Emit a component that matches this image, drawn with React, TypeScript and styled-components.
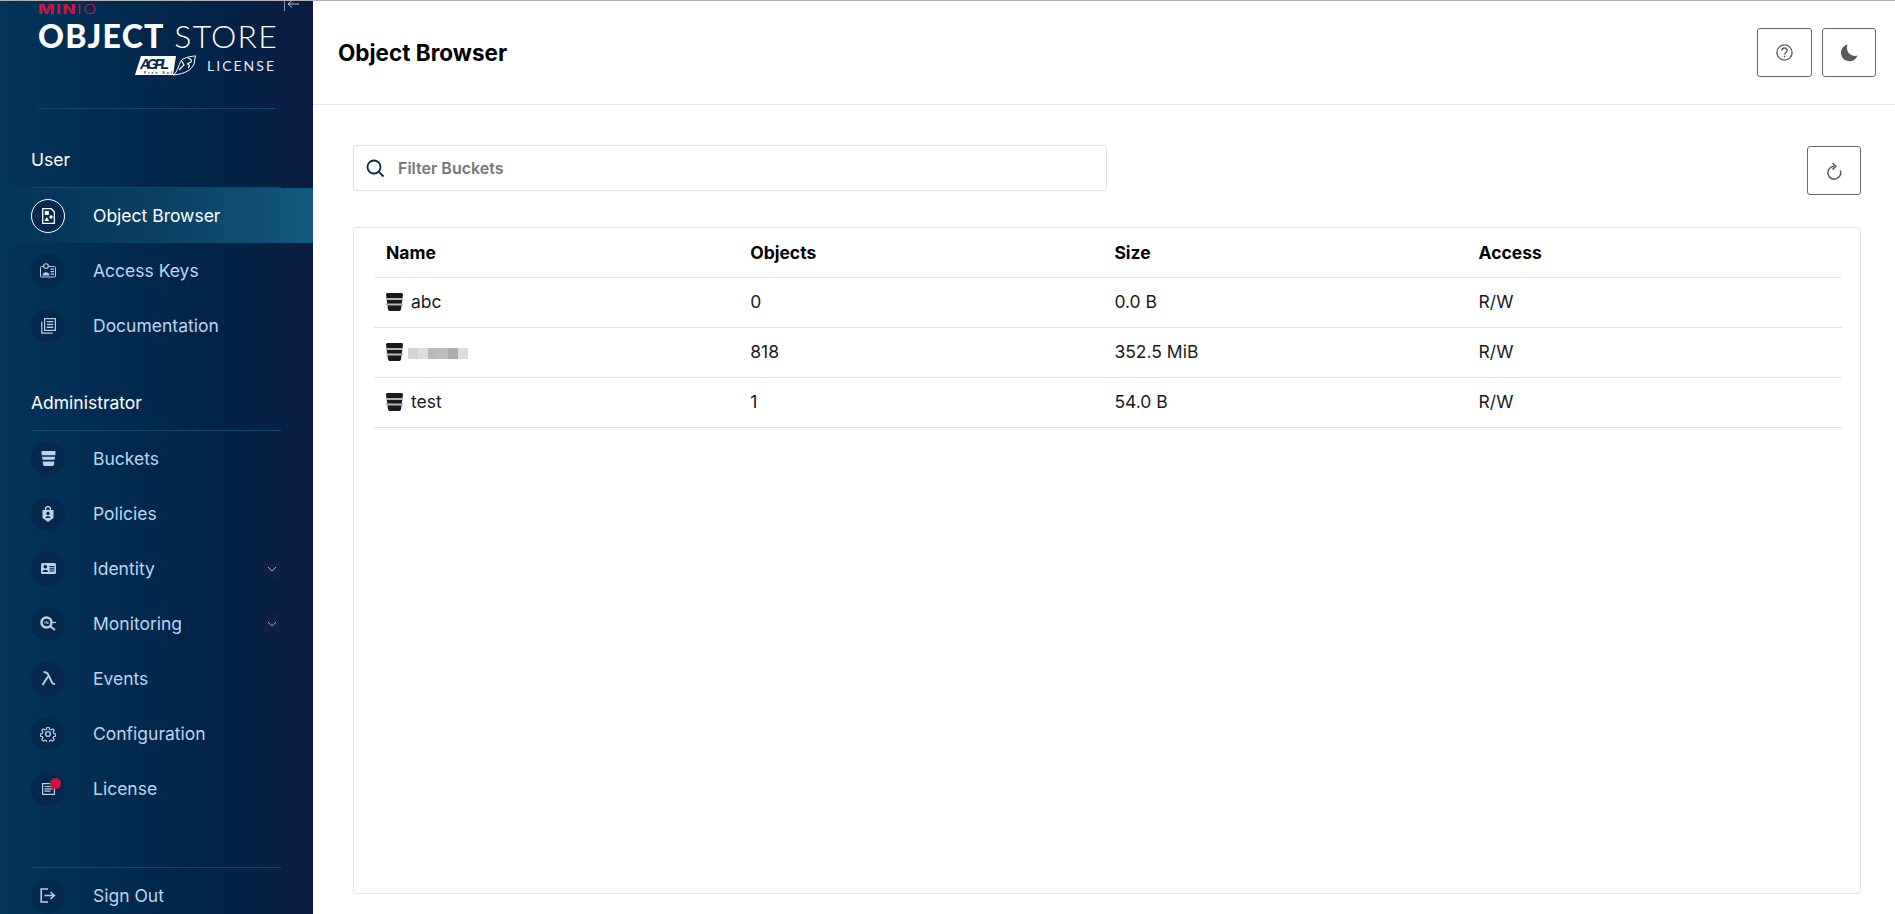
import React from 'react';
import styled, { createGlobalStyle } from 'styled-components';

const FONT = `Inter, "Liberation Sans", sans-serif`;

const GlobalStyle = createGlobalStyle`
  html, body {
    margin: 0;
    padding: 0;
    height: 100%;
    overflow: hidden;
    background: #fff;
    font-family: ${FONT};
  }
  * {
    box-sizing: border-box;
  }
`;

const BucketGlyph: React.FC<{ width?: number; height?: number; stripe?: string }> = ({
  width = 17,
  height = 18,
  stripe = '#06284f',
}) => (
  <svg width={width} height={height} viewBox="0 0 17 18">
    <path
      d="M1.500 0h14A1.500 1.500 0 0 1 17 1.500L15 16.500A1.800 1.800 0 0 1 13.200 18H3.800A1.800 1.800 0 0 1 2 16.500L0 1.500A1.500 1.500 0 0 1 1.500 0z"
      fill="currentColor"
    />
    <path d="M0 5h17v2H0zM0 10.500h17v2H0z" fill={stripe} />
  </svg>
);

const navIcons: Record<string, React.ReactNode> = {
  browser: (
    <svg width="13" height="16" viewBox="0 0 13 16">
      <path d="M.7.7h8.500l3.100 3.100v11.500H.7z" fill="none" stroke="currentColor" strokeWidth="1.300" />
      <rect x="2.800" y="3" width="4" height="4" fill="currentColor" />
      <circle cx="9" cy="9" r="1.700" fill="currentColor" />
      <path d="M4.800 9l2.300 4H2.500z" fill="currentColor" />
    </svg>
  ),
  keys: (
    <svg width="16" height="15" viewBox="0 0 16 15">
      <path d="M4 3.500H1.500a1 1 0 0 0-1 1V13a1 1 0 0 0 1 1h13a1 1 0 0 0 1-1V4.500a1 1 0 0 0-1-1H8" fill="none" stroke="currentColor" strokeWidth="1" />
      <circle cx="6" cy="3" r="2.300" fill="none" stroke="currentColor" strokeWidth="1.100" />
      <path d="M2.500 12.500c0-4.500 7-4.500 7 0zM10.500 5.500h3.500v1.300h-3.500zM10.500 8h3.500v1.300h-3.500zM10.500 10.500h3.500v1.300h-3.500z" fill="currentColor" />
    </svg>
  ),
  docs: (
    <svg width="15" height="16" viewBox="0 0 15 16">
      <rect x="3.600" y="0.600" width="10.800" height="11.800" fill="none" stroke="currentColor" strokeWidth="1.200" />
      <path d="M.8 3.500v11.700h10.700" fill="none" stroke="currentColor" strokeWidth="1.200" />
      <path d="M5.800 3h6.400v1.300H5.800zM5.800 5.800h6.400v1.300H5.800zM5.800 8.600h6.400v1.300H5.800z" fill="currentColor" />
    </svg>
  ),
  policies: (
    <svg width="12" height="16" viewBox="0 0 12 16">
      <path d="M3.500 4V3a2.500 2.500 0 0 1 5 0v1" fill="none" stroke="currentColor" strokeWidth="1.400" />
      <path d="M.5 4h11v8L6 16 .5 12z" fill="currentColor" />
      <circle cx="6" cy="7.500" r="1.700" fill="#06284f" />
      <path d="M3.300 12c.3-2.500 5.100-2.500 5.400 0z" fill="#06284f" />
    </svg>
  ),
  identity: (
    <svg width="15" height="11" viewBox="0 0 15 11">
      <rect width="15" height="11" rx="1.500" fill="currentColor" />
      <circle cx="4.300" cy="3.800" r="1.800" fill="#06284f" />
      <path d="M1.500 9c.2-3 5.400-3 5.600 0zM8.500 3h5v1.200h-5zM8.500 5.200h5v1.200h-5zM8.500 7.400h5v1.200h-5z" fill="#06284f" />
    </svg>
  ),
  monitoring: (
    <svg width="16" height="15" viewBox="0 0 16 15">
      <circle cx="6.500" cy="6.500" r="5" fill="none" stroke="currentColor" strokeWidth="2.400" />
      <path d="M4 7h1.500l1-2 1 3 .6-1h1" fill="none" stroke="currentColor" strokeWidth="0.900" />
      <path d="M10.500 10.500L15 14" stroke="currentColor" strokeWidth="2" />
      <path d="M12.500 6.500H16" stroke="currentColor" strokeWidth="1.200" />
    </svg>
  ),
  events: (
    <svg width="15" height="15" viewBox="0 0 15 15">
      <path d="M2.500 1.200c3 -.6 4 .5 5 3L11 11.500c.5 1.200 1.500 1.700 3 1.500M7 5.500L1.500 14" fill="none" stroke="currentColor" strokeWidth="1.900" />
    </svg>
  ),
  config: (
    <svg width="16" height="16" viewBox="0 0 24 24" fill="none" stroke="currentColor" strokeWidth="1.900" strokeLinejoin="round">
      <circle cx="12" cy="12" r="3.600" />
      <path d="M10 1.500h4l.6 3.200 2.300 1 2.700-1.900 2.800 2.800-1.900 2.700 1 2.300 3 .4v4l-3 .6-1 2.300 1.900 2.600-2.800 2.800-2.700-1.800-2.300 1-.6 3h-4l-.6-3-2.300-1-2.700 1.800-2.800-2.800 1.900-2.600-1-2.300-3-.6v-4l3-.4 1-2.300L1.600 6.600l2.800-2.800 2.700 1.900 2.300-1z" transform="translate(1.200 .9) scale(.9)" />
    </svg>
  ),
  license: (
    <svg width="13" height="12" viewBox="0 0 13 12">
      <rect x="0.600" y="0.600" width="11.800" height="10.800" fill="none" stroke="currentColor" strokeWidth="1.200" />
      <path d="M2.500 3h8v1.100h-8zM2.500 5.300h8v1.100h-8zM2.500 7.600h6v1.100h-6z" fill="currentColor" />
    </svg>
  ),
  signout: (
    <svg width="16" height="15" viewBox="0 0 16 15">
      <path d="M8 1H1.200v13H8" fill="none" stroke="currentColor" strokeWidth="1.600" />
      <path d="M4.500 7.500h9M10.500 4l3.800 3.500-3.800 3.500" fill="none" stroke="currentColor" strokeWidth="1.600" />
    </svg>
  ),
};

const Chevron = () => (
  <svg width="10" height="6" viewBox="0 0 10 6">
    <path d="M1 1l4 4 4-4" fill="none" stroke="currentColor" strokeWidth="0.900" />
  </svg>
);

interface Nav {
  icon: string;
  label: string;
  expand?: boolean;
  badge?: boolean;
}

const userNav: Nav[] = [
  { icon: 'browser', label: 'Object Browser' },
  { icon: 'keys', label: 'Access Keys' },
  { icon: 'docs', label: 'Documentation' },
];

const adminNav: Nav[] = [
  { icon: 'buckets', label: 'Buckets' },
  { icon: 'policies', label: 'Policies' },
  { icon: 'identity', label: 'Identity', expand: true },
  { icon: 'monitoring', label: 'Monitoring', expand: true },
  { icon: 'events', label: 'Events' },
  { icon: 'config', label: 'Configuration' },
  { icon: 'license', label: 'License', badge: true },
];

const buckets = [
  { name: 'abc', objects: '0', size: '0.0 B', access: 'R/W' },
  { name: '', objects: '818', size: '352.5 MiB', access: 'R/W' },
  { name: 'test', objects: '1', size: '54.0 B', access: 'R/W' },
];

const mosaic = ['#d4d4d4', '#dedede', '#b9b9b9', '#bcbcbc', '#adadad', '#dcdcdc'];

const NavRow: React.FC<{ item: Nav; active?: boolean }> = ({ item, active }) => (
  <NavItem $active={active}>
    <IconCircle $active={active}>
      {item.icon === 'buckets' ? <BucketGlyph width={15} height={15} /> : navIcons[item.icon]}
      {item.badge && <RedDot />}
    </IconCircle>
    <NavLabel $active={active}>{item.label}</NavLabel>
    {item.expand && (
      <ExpandBox>
        <Chevron />
      </ExpandBox>
    )}
  </NavItem>
);

const App: React.FC = () => (
  <>
    <GlobalStyle />
    <Page>
      <Sidebar>
        <CollapseButton>
          <svg width="15" height="11" viewBox="0 0 15 11">
            <path d="M.5 0v11" stroke="#8b98ab" strokeWidth="1" />
            <path d="M15 4H4M8 .5L4 4l4 3.500" fill="none" stroke="#c7d0dc" strokeWidth="0.900" />
          </svg>
        </CollapseButton>
        <Logo>
          <LogoBrand>
            <b>MIN</b>IO
          </LogoBrand>
          <LogoTitle>
            <b>OBJECT</b> STORE
          </LogoTitle>
          <LogoLicense>
            <svg width="61" height="21" viewBox="0 0 61 21">
              <path d="M6 1h35l-3 19H0z" fill="#fff" />
              <text x="5" y="14" fontFamily="Liberation Sans, sans-serif" fontSize="14" fontWeight="700" fontStyle="italic" fill="#06284f" textLength="31">
                AGPL
              </text>
              <text x="9" y="19" fontFamily="Liberation Sans, sans-serif" fontSize="3.500" fontWeight="700" fill="#06284f">
                Free Software
              </text>
              <path d="M38 20C43 18 44 6 48 4c4-2 9-3 13-3-2 3-1 5-2 8-2 5-8 10-21 11z" fill="none" stroke="#fff" strokeWidth="1" />
              <path d="M46 5l3 5-5 5M53 3c3 1 4 2 3 4l-4 2c3 0 3 2 1 4" fill="none" stroke="#fff" strokeWidth="1.200" />
            </svg>
            <span>LICENSE</span>
          </LogoLicense>
        </Logo>
        <LogoRule />
        <SectionTitle $first>User</SectionTitle>
        {userNav.map((item, i) => (
          <NavRow key={item.label} item={item} active={i === 0} />
        ))}
        <SectionTitle>Administrator</SectionTitle>
        {adminNav.map(item => (
          <NavRow key={item.label} item={item} />
        ))}
        <FooterRule />
        <NavRow item={{ icon: 'signout', label: 'Sign Out' }} />
      </Sidebar>
      <Main>
        <Header>
          <Title>Object Browser</Title>
          <HeaderActions>
            <OutlineButton type="button" aria-label="Help" $width={55}>
              <svg width="17" height="17" viewBox="0 0 17 17">
                <circle cx="8.500" cy="8.500" r="7.600" fill="none" stroke="currentColor" strokeWidth="1.300" />
                <path d="M5.900 6.500c.2-3.400 5.400-3.200 5.300 0 0 2-2.500 1.900-2.600 4" fill="none" stroke="currentColor" strokeWidth="1.400" />
                <circle cx="8.600" cy="12.600" r="0.900" fill="currentColor" />
              </svg>
            </OutlineButton>
            <OutlineButton type="button" aria-label="Dark mode">
              <svg width="18" height="18" viewBox="0 0 18 18">
                <path d="M7.500.5a8.500 8.500 0 1 0 10 11C11.500 13.500 5 8 7.500.5z" fill="currentColor" />
              </svg>
            </OutlineButton>
          </HeaderActions>
        </Header>
        <Content>
          <Toolbar>
            <SearchBox>
              <svg width="19" height="19" viewBox="0 0 19 19">
                <circle cx="8" cy="8" r="6.500" fill="none" stroke="#06284f" strokeWidth="1.800" />
                <path d="M12.700 12.700L17.500 17.500" stroke="#06284f" strokeWidth="1.800" />
              </svg>
              <SearchInput placeholder="Filter Buckets" />
            </SearchBox>
            <OutlineButton type="button" aria-label="Refresh">
              <svg width="16" height="18" viewBox="0 0 16 18">
                <path d="M14.300 8.500A6.400 6.400 0 1 1 8 4.300" fill="none" stroke="currentColor" strokeWidth="1.500" />
                <path d="M6.500 1l3.300 3.300-3.300 3.300" fill="none" stroke="currentColor" strokeWidth="1.500" />
              </svg>
            </OutlineButton>
          </Toolbar>
          <TablePanel>
            <HeadRow>
              <HeadCell>Name</HeadCell>
              <HeadCell>Objects</HeadCell>
              <HeadCell>Size</HeadCell>
              <HeadCell>Access</HeadCell>
            </HeadRow>
            {buckets.map(b => (
              <Row key={b.objects}>
                <NameCell>
                  <BucketGlyph stripe="#b5b5b5" />
                  {b.name ? (
                    <span>{b.name}</span>
                  ) : (
                    <Mosaic>
                      {mosaic.map((c, i) => (
                        <MosaicCell key={i} $color={c} />
                      ))}
                    </Mosaic>
                  )}
                </NameCell>
                <Cell>{b.objects}</Cell>
                <Cell>{b.size}</Cell>
                <Cell>{b.access}</Cell>
              </Row>
            ))}
          </TablePanel>
        </Content>
      </Main>
    </Page>
  </>
);

const Page = styled.div`
  display: flex;
  height: 914px;
  overflow: hidden;
  border-top: 1px solid #b0b0b0;
`;

const Sidebar = styled.aside`
  position: relative;
  flex: 0 0 313px;
  display: flex;
  flex-direction: column;
  overflow: hidden;
  background: linear-gradient(90deg, #03345a 0%, #012549 60%, #0b1d41 100%);
`;

const CollapseButton = styled.div`
  position: absolute;
  top: -1px;
  left: 284px;
  line-height: 0;
`;

const Logo = styled.div`
  flex: none;
  display: flex;
  flex-direction: column;
  align-items: flex-start;
  width: 238px;
  height: 104px;
  margin: 3px 0 0 38px;
  color: #fff;
`;

const LogoBrand = styled.div`
  font-family: Inter, sans-serif;
  font-size: 12.500px;
  line-height: 11px;
  height: 11px;
  font-weight: 300;
  letter-spacing: 1px;
  color: #c8153e;
  transform: scaleX(1.4);
  transform-origin: left center;

  b {
    font-weight: 800;
  }
`;

const LogoTitle = styled.div`
  margin-top: 4px;
  width: 100%;
  font-family: Lato, sans-serif;
  font-size: 32px;
  line-height: 34px;
  font-weight: 300;
  white-space: nowrap;
  letter-spacing: 1.200px;

  b {
    font-weight: 900;
  }
`;

const LogoLicense = styled.div`
  margin-top: 2px;
  width: 100%;
  display: flex;
  justify-content: flex-end;
  align-items: center;
  gap: 11px;
  font-family: Lato, sans-serif;
  font-size: 14px;
  letter-spacing: 2px;
  color: #e6ebf1;
`;

const LogoRule = styled.div`
  flex: none;
  height: 1px;
  margin: 0 38px;
  background: #15456b;
`;

const SectionTitle = styled.div<{ $first?: boolean }>`
  flex: none;
  margin: ${p => (p.$first ? '37px' : '36px')} 32px 0 31px;
  height: 42px;
  border-bottom: 1px solid #14476c;
  color: #fff;
  font-size: 17.500px;
  line-height: 28px;
`;

const NavItem = styled.div<{ $active?: boolean }>`
  flex: none;
  height: 55px;
  display: flex;
  align-items: center;
  padding: 0 32px 0 31px;
  background: ${p => (p.$active ? 'linear-gradient(90deg, rgba(20, 90, 125, 0) 0%, #115a7d 100%)' : 'transparent')};
`;

const IconCircle = styled.div<{ $active?: boolean }>`
  position: relative;
  flex: none;
  width: 34px;
  height: 34px;
  border-radius: 50%;
  display: flex;
  align-items: center;
  justify-content: center;
  color: ${p => (p.$active ? '#fff' : '#bcd0e6')};
  background: #06284f;
  border: 1px solid ${p => (p.$active ? '#fff' : '#08264e')};
`;

const RedDot = styled.span`
  position: absolute;
  top: 5px;
  right: 3px;
  width: 11px;
  height: 11px;
  border-radius: 50%;
  background: #c8153e;
`;

const NavLabel = styled.span<{ $active?: boolean }>`
  flex: 1;
  margin-left: 28px;
  font-size: 17.500px;
  color: ${p => (p.$active ? '#fff' : '#bcd6f0')};
`;

const ExpandBox = styled.div`
  flex: none;
  width: 18px;
  height: 19px;
  border-radius: 2px;
  display: flex;
  align-items: center;
  justify-content: center;
  color: #a9bace;
  background: #0e2145;
`;

const FooterRule = styled.div`
  flex: none;
  height: 1px;
  margin: 51px 32px 0 31px;
  background: #14476c;
`;

const Main = styled.main`
  flex: 1;
  min-width: 0;
  display: flex;
  flex-direction: column;
`;

const Header = styled.header`
  flex: none;
  height: 104px;
  padding: 0 19px 0 25px;
  display: flex;
  align-items: center;
  justify-content: space-between;
  border-bottom: 1px solid #e5e5e5;
`;

const Title = styled.h1`
  margin: 0;
  color: #000;
  font-size: 22.500px;
  font-weight: 700;
`;

const HeaderActions = styled.div`
  display: flex;
  gap: 10px;
`;

const OutlineButton = styled.button<{ $width?: number }>`
  width: ${p => p.$width ?? 54}px;
  height: 49px;
  padding: 0;
  display: flex;
  align-items: center;
  justify-content: center;
  color: #5a5a5a;
  background: #fff;
  border: 1px solid #696969;
  border-radius: 3px;
`;

const Content = styled.div`
  flex: 1;
  min-height: 0;
  padding: 41px 34px 20px 40px;
  display: flex;
  flex-direction: column;
`;

const Toolbar = styled.div`
  flex: none;
  display: flex;
  justify-content: space-between;
  align-items: flex-start;
  height: 81px;
`;

const SearchBox = styled.div`
  width: 754px;
  height: 46px;
  margin-top: -1px;
  padding: 0 12px;
  display: flex;
  align-items: center;
  gap: 13px;
  border: 1px solid #e2e2e2;
  border-radius: 3px;
`;

const SearchInput = styled.input`
  flex: 1;
  border: none;
  outline: none;
  padding: 0;
  font-family: ${FONT};
  font-size: 16px;
  font-weight: 600;

  &::placeholder {
    color: #767676;
    opacity: 1;
  }
`;

const TablePanel = styled.section`
  flex: 1;
  padding: 0 18px 0 20px;
  border: 1px solid #e5e5e5;
  border-radius: 3px;
`;

const HeadRow = styled.div`
  display: grid;
  grid-template-columns: repeat(3, 364.200px) 1fr;
  height: 50px;
  align-items: center;
  padding: 0 0 0 12px;
  border-bottom: 1px solid #e2e2e2;
`;

const Row = styled(HeadRow)`
  padding-bottom: 2px;
`;

const HeadCell = styled.div`
  color: #000;
  font-size: 17.500px;
  font-weight: 700;
`;

const Cell = styled.div`
  color: #1a1a1a;
  font-size: 17.500px;
`;

const NameCell = styled(Cell)`
  display: flex;
  align-items: center;
  gap: 8px;
  color: #1a1a1a;
`;

const Mosaic = styled.div`
  display: flex;
  height: 11px;
  margin: 4px 0 0 -3px;
`;

const MosaicCell = styled.span<{ $color: string }>`
  width: 10px;
  background: ${p => p.$color};
`;

export default App;
